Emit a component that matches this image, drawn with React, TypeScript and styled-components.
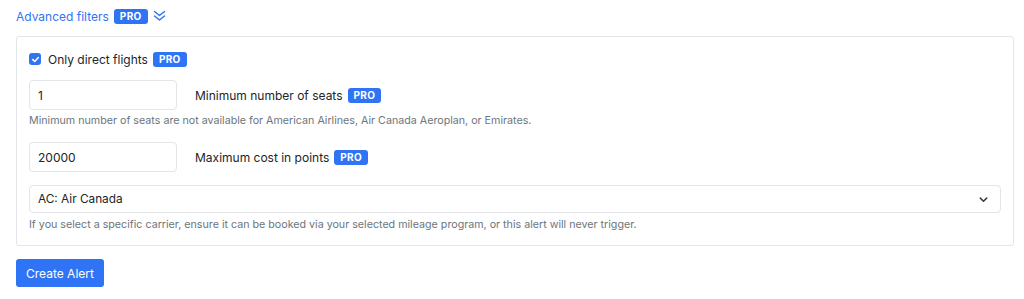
import React from 'react'
import styled, { createGlobalStyle } from 'styled-components'

const blue = '#2f74f4'
const border = '#e3e5e8'
const text = '#212529'
const muted = '#6c757d'

const GlobalStyle = createGlobalStyle`
  body {
    margin: 0;
    background: #fff;
    font-family: Inter, "Noto Sans", sans-serif;
    color: ${text};
  }
`

const Page = styled.div`
  padding: 6px 10px 0 16px;
  display: flex;
  flex-direction: column;
`

const FiltersToggle = styled.a`
  display: flex;
  align-items: center;
  height: 20px;
  color: ${blue};
  font-size: 12px;
  text-decoration: none;
  cursor: pointer;

  svg {
    margin-left: 5px;
  }
`

const Badge = styled.span`
  display: inline-flex;
  align-items: center;
  justify-content: center;
  background: ${blue};
  color: #fff;
  font-size: 10px;
  font-weight: 700;
  letter-spacing: 0.3px;
  height: 15px;
  padding: 0 6px;
  border-radius: 3px;
  margin-left: 5px;
`

const Card = styled.div`
  margin-top: 10px;
  border: 1px solid ${border};
  border-radius: 3px;
  padding: 14px 12px 14px 12px;
  display: flex;
  flex-direction: column;
`

const CheckRow = styled.label`
  display: flex;
  align-items: center;
  font-size: 12px;
  height: 16px;
`

const Check = styled.span`
  width: 12px;
  height: 12px;
  border-radius: 3px;
  background: ${blue};
  display: inline-flex;
  align-items: center;
  justify-content: center;
  margin-right: 7px;
`

const FieldRow = styled.div<{ $top: number }>`
  display: flex;
  align-items: center;
  margin-top: ${p => p.$top}px;
`

const Input = styled.div`
  box-sizing: border-box;
  width: 148px;
  height: 30px;
  border: 1px solid ${border};
  border-radius: 4px;
  padding: 0 8px;
  display: flex;
  align-items: center;
  font-size: 12px;
`

const FieldLabel = styled.span`
  display: flex;
  align-items: center;
  margin-left: 18px;
  font-size: 12px;
`

const Help = styled.div<{ $top: number }>`
  font-size: 10.7px;
  line-height: 13px;
  color: ${muted};
  margin-top: ${p => p.$top}px;
`

const Select = styled.div`
  box-sizing: border-box;
  margin-top: 13px;
  height: 28px;
  border: 1px solid ${border};
  border-radius: 4px;
  padding: 0 11px 0 8px;
  display: flex;
  align-items: center;
  justify-content: space-between;
  font-size: 11.8px;
`

const Button = styled.button`
  margin-top: 13px;
  align-self: flex-start;
  height: 28px;
  padding: 0 10px;
  border: none;
  border-radius: 3px;
  background: ${blue};
  color: #fff;
  font-family: inherit;
  font-size: 12px;
`

export default function App() {
  return (
    <>
      <GlobalStyle />
      <Page>
        <FiltersToggle>
          Advanced filters
          <Badge>PRO</Badge>
          <svg width="13" height="14" viewBox="0 0 13 14" fill="none" stroke={blue} strokeWidth="1.5" strokeLinecap="round" strokeLinejoin="round">
            <path d="M1.5 2.5 6.5 6.5l5-4" />
            <path d="M1.5 7 6.5 11l5-4" />
          </svg>
        </FiltersToggle>
        <Card>
          <CheckRow>
            <Check>
              <svg width="9" height="9" viewBox="0 0 10 10" fill="none" stroke="#fff" strokeWidth="1.8" strokeLinecap="round" strokeLinejoin="round">
                <path d="M2 5.2 4.1 7.2 8 3" />
              </svg>
            </Check>
            Only direct flights
            <Badge>PRO</Badge>
          </CheckRow>
          <FieldRow $top={13}>
            <Input>1</Input>
            <FieldLabel>
              Minimum number of seats
              <Badge>PRO</Badge>
            </FieldLabel>
          </FieldRow>
          <Help $top={4}>Minimum number of seats are not available for American Airlines, Air Canada Aeroplan, or Emirates.</Help>
          <FieldRow $top={15}>
            <Input>20000</Input>
            <FieldLabel>
              Maximum cost in points
              <Badge>PRO</Badge>
            </FieldLabel>
          </FieldRow>
          <Select>
            AC: Air Canada
            <svg width="11" height="11" viewBox="0 0 12 12" fill="none" stroke="#343a40" strokeWidth="1.6" strokeLinecap="round" strokeLinejoin="round">
              <path d="M2.5 4.5 6 8l3.5-3.5" />
            </svg>
          </Select>
          <Help $top={5}>If you select a specific carrier, ensure it can be booked via your selected mileage program, or this alert will never trigger.</Help>
        </Card>
        <Button>Create Alert</Button>
      </Page>
    </>
  )
}
